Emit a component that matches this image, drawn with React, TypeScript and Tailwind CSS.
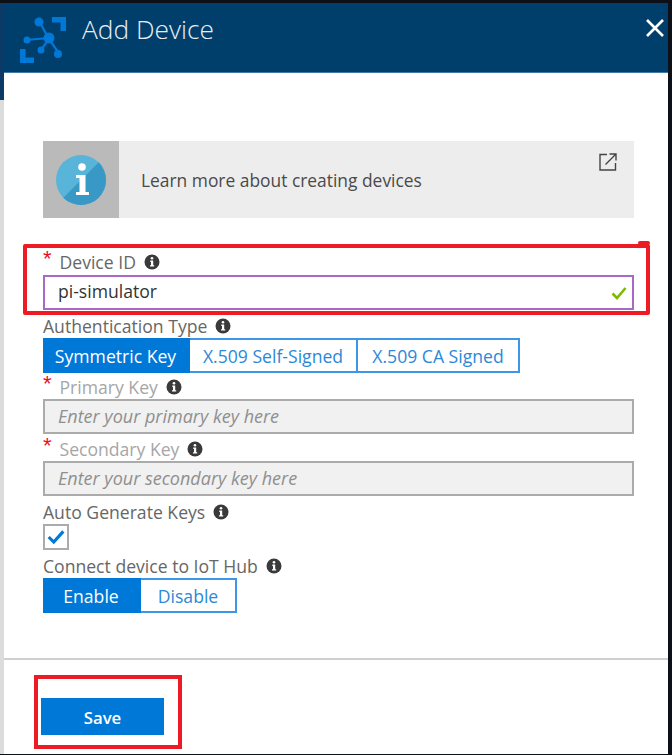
import React from "react";

const font = { fontFamily: '"Open Sans", "Noto Sans", sans-serif' };

function Info({ className = "" }: { className?: string }) {
  return (
    <svg viewBox="0 0 16 16" className={`w-[16px] h-[16px] shrink-0 ${className}`}>
      <circle cx="8" cy="8" r="7.5" fill="#3a3a3a" />
      <circle cx="8" cy="4.3" r="1.3" fill="#fff" />
      <path d="M6.3 6.6H9.2V11.3H10.2V12.6H6V11.3H7V7.9H6.3Z" fill="#fff" />
    </svg>
  );
}

function Logo() {
  return (
    <svg viewBox="0 0 48 48" className="w-[48px] h-[48px]">
      <g fill="#0078d7">
        <path d="M33 2H47V16H41.5V7.5H33Z" />
        <path d="M1 34H6.5V42.5H15V48H1Z" />
      </g>
      <g stroke="#0078d7" strokeWidth="2.2" fill="none">
        <path d="M20 6L30 24L39 37" />
        <path d="M7 25L30 23" />
        <path d="M30 24L22 35" />
      </g>
      <g fill="#0078d7">
        <circle cx="20" cy="7" r="4.5" />
        <circle cx="30" cy="23" r="5.5" />
        <circle cx="8" cy="25" r="3.5" />
        <circle cx="22" cy="35" r="3.5" />
        <circle cx="39" cy="39" r="4" />
      </g>
    </svg>
  );
}

function Label({ text, required, disabled, mt }: { text: string; required?: boolean; disabled?: boolean; mt: string }) {
  return (
    <div className={`flex items-center h-[22px] -translate-y-[1px] ${mt}`}>
      {required && (
        <span className="w-[16.5px] text-[#e81123] text-[22px] leading-[22px] h-[22px] -translate-y-[3px] font-['Liberation_Sans']">*</span>
      )}
      <span className={`text-[17.6px] leading-[22px] ${disabled ? "text-[#a6a6a6]" : "text-[#666666]"}`}>{text}</span>
      <Info className="ml-[8px]" />
    </div>
  );
}

function Segment({ items, widths }: { items: string[]; widths: string[] }) {
  return (
    <div className="flex h-[35px] w-fit">
      {items.map((t, i) => (
        <div
          key={t}
          className={`${widths[i]} flex items-center justify-center pt-[2px] text-[17.6px] border-y-2 border-r-2 ${
            i === 0 ? "bg-[#0078d7] text-white border-[#0078d7] border-r-0" : "bg-white text-[#2b88d8] border-[#3d96e6]"
          }`}
        >
          {t}
        </div>
      ))}
    </div>
  );
}

function DisabledInput({ text }: { text: string }) {
  return (
    <div className="h-[35px] border-2 border-[#ababab] bg-[#f1f1f1] flex items-center pl-[13px] text-[18px] italic text-[#8f8f8f]">
      {text}
    </div>
  );
}

export default function App() {
  return (
    <div style={font} className="relative w-[672px] h-[755px] overflow-hidden bg-[#0d1017]">
      <div className="flex h-full pt-[3px] pb-[1px]">
        <div className="w-[4px] shrink-0 flex flex-col">
          <div className="h-[97px] bg-[#0b3a66]" />
          <div className="flex-1 bg-[#dcdcdc]" />
        </div>
        <div className="w-[664px] shrink-0 bg-white flex flex-col">
          <div className="h-[70px] shrink-0 bg-[#003e6c] border-b border-[#3f7aa6] flex items-start">
            <div className="ml-[15px] mt-[12px]">
              <Logo />
            </div>
            <div className="ml-[15px] mt-[8px] text-[26.3px] leading-[36px] font-light text-[#e9eef3]">Add Device</div>
            <svg viewBox="0 0 20 20" className="w-[20px] h-[20px] ml-auto mr-[3px] mt-[15px]">
              <path d="M2 2L18 18M18 2L2 18" stroke="#fff" strokeWidth="2.6" />
            </svg>
          </div>

          <div className="flex-1 flex flex-col pl-[39px] pr-[34px]">
            <div className="mt-[68px] h-[77px] bg-[#ededed] flex relative">
              <div className="w-[76px] h-full bg-[#bababa] flex items-center justify-center">
                <svg viewBox="0 0 50 50" className="w-[50px] h-[50px]">
                  <circle cx="25" cy="25" r="25" fill="#59b4d9" />
                  <path d="M42.7 7.3A25 25 0 0 1 7.3 42.7Z" fill="#3999c6" />
                  <circle cx="26" cy="12" r="3.8" fill="#fff" />
                  <path d="M20 20H29.5V37H33V40H20V37H23.5V23H20Z" fill="#fff" />
                </svg>
              </div>
              <div className="pl-[22px] flex items-center text-[17.4px] text-[#4a4a4a] pt-[2px]">Learn more about creating devices</div>
              <svg viewBox="0 0 18 18" className="absolute right-[17px] top-[12px] w-[18px] h-[18px]" fill="none" stroke="#444" strokeWidth="1.4">
                <path d="M8 1.5H1V17H16.5V10" />
                <path d="M6.5 11.5L16.5 1.5M10.5 1H17V7.5" />
              </svg>
            </div>

            <Label text="Device ID" required mt="mt-[34px]" />
            <div className="h-[35px] mt-[1px] border-2 border-[#a968c4] bg-white flex items-center pl-[13px] pr-[5px] text-[17.6px] text-[#333]">
              <span className="-translate-y-[1px]">pi-simulator</span>
              <svg viewBox="0 0 16 14" className="w-[16px] h-[14px] ml-auto">
                <path d="M1.5 7.5L6 12L14.5 2" stroke="#7fba00" strokeWidth="2.6" fill="none" />
              </svg>
            </div>

            <Label text="Authentication Type" mt="mt-[6px]" />
            <Segment items={["Symmetric Key", "X.509 Self-Signed", "X.509 CA Signed"]} widths={["w-[147px]", "w-[168px]", "w-[162px]"]} />

            <Label text="Primary Key" required disabled mt="mt-[4px]" />
            <DisabledInput text="Enter your primary key here" />

            <Label text="Secondary Key" required disabled mt="mt-[5px]" />
            <DisabledInput text="Enter your secondary key here" />

            <Label text="Auto Generate Keys" mt="mt-[6px]" />
            <div className="w-[26px] h-[26px] border-2 border-[#ababab] flex items-center justify-center">
              <svg viewBox="0 0 16 14" className="w-[18px] h-[16px]">
                <path d="M1.5 7L6 11.5L14.5 2" stroke="#0078d7" strokeWidth="2.8" fill="none" />
              </svg>
            </div>

            <Label text="Connect device to IoT Hub" mt="mt-[6px]" />
            <Segment items={["Enable", "Disable"]} widths={["w-[98px]", "w-[96px]"]} />

            <div className="h-[2px] bg-[#cfcfcf] mt-[45px] -ml-[39px] -mr-[34px]" />

            <button className="mt-[38px] -ml-[2px] w-[123px] h-[37px] pt-[2px] bg-[#0078d7] text-white text-[16.8px] font-semibold">Save</button>
          </div>
        </div>
        <div className="w-[4px] shrink-0" />
      </div>

      {/* Red annotation boxes */}
      <div className="absolute left-[23px] top-[244px] w-[627px] h-[71px] border-[4px] border-[#ed1c24] rounded-[2px] pointer-events-none" />
      <div className="absolute left-[638px] top-[241px] w-[12px] h-[4px] bg-[#ed1c24] rounded-[2px] pointer-events-none" />
      <div className="absolute left-[34px] top-[675px] w-[148px] h-[74px] border-[4px] border-[#ed1c24] pointer-events-none" />
    </div>
  );
}
